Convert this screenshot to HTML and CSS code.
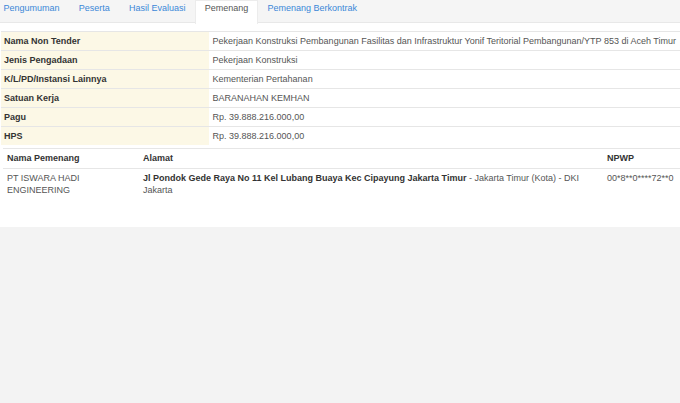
FILE: index.html
```html
<!DOCTYPE html>
<html lang="id">
<head>
<meta charset="utf-8">
<title>Pemenang</title>
<link rel="stylesheet" href="styles.css">
</head>
<body>
<div class="page">
  <ul class="tabs">
    <li class="tab"><a href="#">Pengumuman</a></li>
    <li class="tab"><a href="#">Peserta</a></li>
    <li class="tab"><a href="#">Hasil Evaluasi</a></li>
    <li class="tab active"><a href="#">Pemenang</a></li>
    <li class="tab"><a href="#">Pemenang Berkontrak</a></li>
  </ul>
  <div class="content">
    <table class="info">
      <tr><th>Nama Non Tender</th><td>Pekerjaan Konstruksi Pembangunan Fasilitas dan Infrastruktur Yonif Teritorial Pembangunan/YTP 853 di Aceh Timur</td></tr>
      <tr><th>Jenis Pengadaan</th><td>Pekerjaan Konstruksi</td></tr>
      <tr><th>K/L/PD/Instansi Lainnya</th><td>Kementerian Pertahanan</td></tr>
      <tr><th>Satuan Kerja</th><td>BARANAHAN KEMHAN</td></tr>
      <tr><th>Pagu</th><td>Rp. 39.888.216.000,00</td></tr>
      <tr><th>HPS</th><td>Rp. 39.888.216.000,00</td></tr>
    </table>
    <table class="winners">
      <colgroup><col class="c-name"><col class="c-addr"><col class="c-npwp"></colgroup>
      <thead>
        <tr><th>Nama Pemenang</th><th>Alamat</th><th>NPWP</th></tr>
      </thead>
      <tbody>
        <tr>
          <td>PT ISWARA HADI ENGINEERING</td>
          <td><b>Jl Pondok Gede Raya No 11 Kel Lubang Buaya Kec Cipayung Jakarta Timur</b> - Jakarta Timur (Kota) - DKI Jakarta</td>
          <td>00*8**0****72**0</td>
        </tr>
      </tbody>
    </table>
  </div>
</div>
</body>
</html>
```
FILE: styles.css
```css
html, body {
  margin: 0;
  padding: 0;
  background: #f3f3f3;
  overflow: hidden;
}
body {
  font-family: "Liberation Sans", Arial, Helvetica, sans-serif;
  font-size: 9px;
  color: #555;
}
.page {
  width: 680px;
  overflow: hidden;
}
.tabs {
  list-style: none;
  margin: 0 0 0 -6px;
  padding: 0;
  display: flex;
  height: 22px;
  background: #f5f5f5;
  border-bottom: 1px solid #e8e8e8;
}
.tab a {
  display: block;
  padding: 2px 8.6px 0;
  height: 20px;
  line-height: 11px;
  border: 1px solid transparent;
  border-bottom: 0;
  color: #3b88d8;
  text-decoration: none;
}
.tab.active a {
  background: #fff;
  color: #555;
  border-color: #ececec;
  height: 21px;
  margin-bottom: -1px;
}
.content {
  background: #fff;
  height: 204px;
  padding-top: 8px;
  box-sizing: border-box;
}
table {
  border-collapse: collapse;
}
.info {
  margin-left: 1px;
  white-space: nowrap;
}
.info th, .info td {
  border-top: 1px solid #e6e6e6;
  padding: 3px 4px 3px 3px;
  line-height: 12px;
  text-align: left;
  font-weight: normal;
}
.info th {
  width: 203px;
  background: #fcf8e6;
  color: #333;
  font-weight: bold;
}
.info td {
  padding-left: 4px;
  color: #555;
}
.winners {
  margin: 3px 0 0 3px;
  table-layout: fixed;
  width: 677px;
  border-top: 1px solid #e6e6e6;
}
.c-name { width: 136px; }
.c-addr { width: 464px; }
.c-npwp { width: 77px; }
.winners th, .winners td {
  text-align: left;
  vertical-align: top;
  line-height: 12.7px;
  padding: 3px 4px;
}
.winners th {
  color: #333;
  font-weight: bold;
  border-bottom: 1px solid #e6e6e6;
}
.winners td {
  color: #555;
}
.winners td b {
  color: #333;
}
```
